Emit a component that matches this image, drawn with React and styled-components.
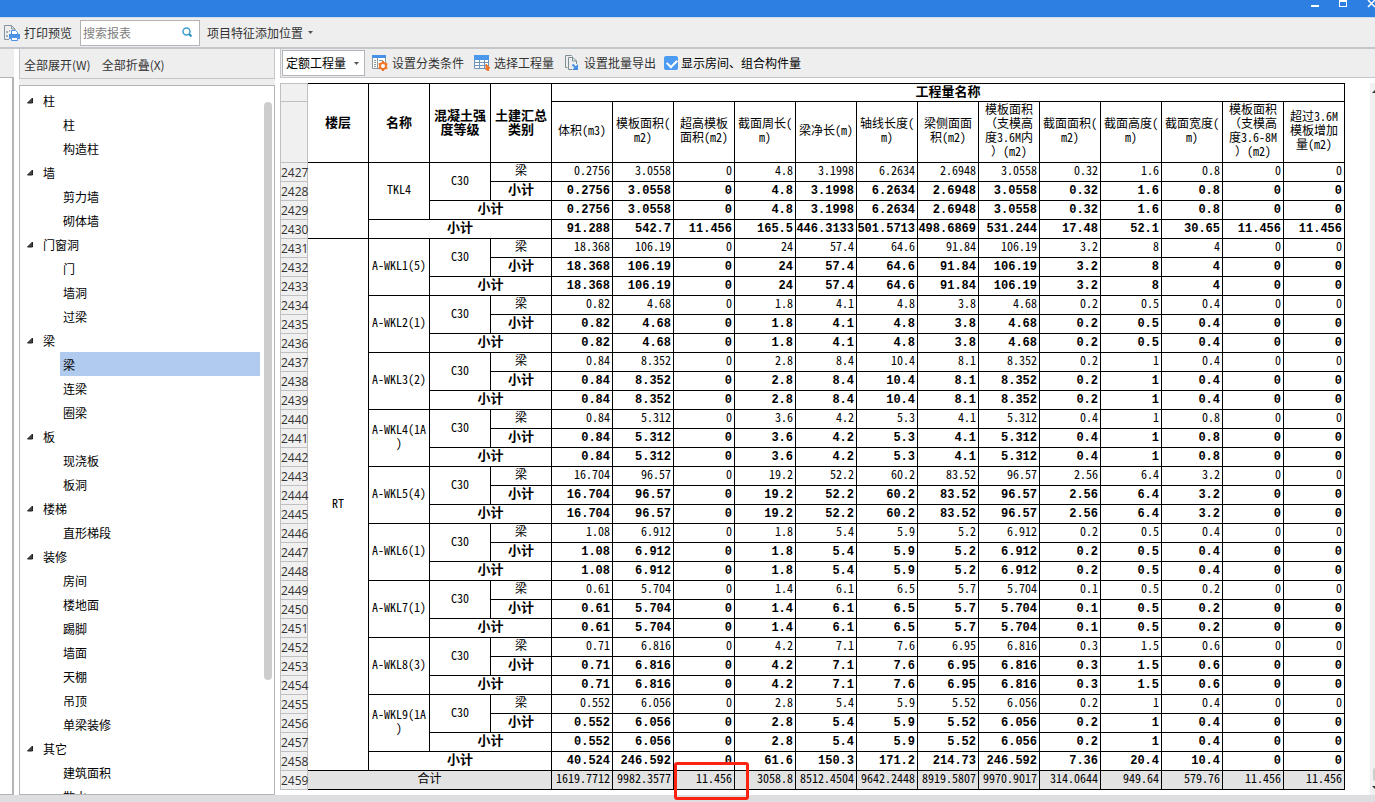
import React, { useState } from 'react';
import styled, { createGlobalStyle, ThemeProvider } from 'styled-components';

const theme = {
  colors: {
    title: '#2d7fe2',
    bar: '#eeeeee',
    line: '#c3c7cc',
    border: '#b2b4b8',
    text: '#333333',
    selected: '#b0cbed',
    total: '#e3e3e3',
    mark: '#fb2413',
    blue: '#4c9bf2',
  },
  fonts: {
    ui: '"Noto Sans CJK SC", sans-serif',
    rowNumber: '"Open Sans", sans-serif',
    sheet: '"Noto Sans Mono CJK SC", "DejaVu Sans Mono", "Noto Sans CJK SC", monospace',
    boldNumber: '"Liberation Mono", monospace',
  },
};

const GlobalStyle = createGlobalStyle`
  * {
    box-sizing: border-box;
  }

  body {
    margin: 0;
    background-color: #ffffff;
    overflow: hidden;
  }

  button, input, select {
    font: inherit;
    color: inherit;
  }
`;

const Window = styled.div`
  display: flex;
  flex-direction: column;
  height: 100vh;
  font-family: ${props => props.theme.fonts.ui};
  font-size: 12px;
  line-height: 18px;
  color: ${props => props.theme.colors.text};
`;

const TitleBar = styled.header`
  display: flex;
  justify-content: flex-end;
  gap: 20px;
  flex: 0 0 18px;
  background-color: ${props => props.theme.colors.title};
  border-bottom: 1px solid #cfdcec;
`;

const WindowButton = styled.button`
  display: flex;
  width: 8px;
  height: 8px;
  padding: 0;
  border: 0;
  background: none;
  color: #ffffff;
`;

const Toolbar = styled.div`
  display: flex;
  align-items: center;
  flex: 0 0 31px;
  padding-left: 4px;
  background-color: ${props => props.theme.colors.bar};
  border-bottom: 2px solid ${props => props.theme.colors.line};
`;

const ToolButton = styled.button`
  display: flex;
  align-items: center;
  gap: 4px;
  padding: 0;
  border: 0;
  background: none;
  white-space: nowrap;
`;

const SearchBox = styled.label`
  display: flex;
  align-items: center;
  width: 120px;
  height: 26px;
  margin: 0 7px 0 8px;
  padding: 0 6px 0 2px;
  background-color: #ffffff;
  border: 1px solid ${props => props.theme.colors.border};

  input {
    flex: 1;
    min-width: 0;
    padding: 0;
    border: 0;
    outline: 0;
    background: none;
  }

  input::placeholder {
    color: #808080;
    opacity: 1;
  }
`;

const Workspace = styled.div`
  display: flex;
  flex: 1;
  min-height: 0;
  border-bottom: 7px solid #dedee0;
`;

const DockedPanel = styled.div`
  display: flex;
  flex-direction: column;
  flex: 0 0 14px;
  margin-right: 5px;
`;

const DockedHead = styled.div`
  flex: 0 0 28px;
  background-color: ${props => props.theme.colors.bar};
`;

const DockedBody = styled.div`
  flex: 1;
  border: solid ${props => props.theme.colors.border};
  border-width: 1px 2px 1px 0;
`;

const Sidebar = styled.aside`
  display: flex;
  flex-direction: column;
  flex: 0 0 256px;
  margin-right: 5px;
  background-color: ${props => props.theme.colors.bar};
`;

const SidebarActions = styled.div`
  display: flex;
  align-items: center;
  gap: 11px;
  flex: 0 0 30px;
  margin-bottom: 6px;
  padding: 2px 0 0 4px;
  border: 1px solid ${props => props.theme.colors.line};
  border-top: 0;
`;

const TreePanel = styled.div`
  display: flex;
  flex: 1;
  min-height: 0;
  overflow: hidden;
  padding: 2px 2px 0 0;
  background-color: #ffffff;
  border: 1px solid ${props => props.theme.colors.border};
`;

const Tree = styled.ul`
  flex: 1;
  margin: 0;
  padding: 0;
  list-style: none;
  color: #000000;

  ul {
    margin: 0;
    padding: 0 0 0 40px;
    list-style: none;
  }
`;

const TreeItem = styled.button`
  display: flex;
  align-items: center;
  width: ${props => (props.$group ? '100%' : '200px')};
  height: 24px;
  padding: 1px 0 0 ${props => (props.$group ? '6px' : '3px')};
  gap: 9px;
  border: 0;
  background-color: ${props => (props.$selected ? props.theme.colors.selected : 'transparent')};
`;

const TreeThumb = styled.div`
  flex: 0 0 8px;
  height: 578px;
  margin-top: 14px;
  border-radius: 4px;
  background-color: #cdcdcd;
`;

const Report = styled.main`
  display: flex;
  flex-direction: column;
  flex: 1;
  min-width: 0;
`;

const ReportToolbar = styled.div`
  display: flex;
  align-items: center;
  flex: 0 0 29px;
  padding-left: 1px;
  background-color: ${props => props.theme.colors.bar};
  border: solid ${props => props.theme.colors.line};
  border-width: 0 0 1px 1px;
`;

const SelectBox = styled.div`
  display: flex;
  align-items: center;
  width: 83px;
  height: 26px;
  margin-right: 7px;
  padding-right: 5px;
  background-color: #ffffff;
  border: 1px solid ${props => props.theme.colors.border};
  color: #000000;

  select {
    flex: 1;
    min-width: 0;
    padding: 0 0 0 3px;
    border: 0;
    outline: 0;
    appearance: none;
    background: none;
  }
`;

const ReportTools = styled.div`
  display: flex;
  align-items: center;
  gap: 10px;
`;

const CheckLabel = styled.label`
  display: flex;
  align-items: center;
  gap: 3px;
  margin-left: 8px;
  color: #000000;
  white-space: nowrap;

  input {
    appearance: none;
    width: 14px;
    height: 14px;
    margin: 0;
    border-radius: 2px;
    background: #ffffff;
    border: 1px solid ${props => props.theme.colors.border};
  }

  input:checked {
    border: 0;
    background: ${props => props.theme.colors.blue};
  }

  input:checked::before {
    content: '';
    display: block;
    width: 8px;
    height: 5px;
    margin: 3px;
    border: solid #ffffff;
    border-width: 0 0 2px 2px;
    transform: rotate(-45deg);
  }
`;

const ReportBody = styled.div`
  display: flex;
  justify-content: space-between;
  flex: 1;
  min-height: 0;
  padding-top: 5px;
`;

const Sheet = styled.table`
  align-self: flex-start;
  table-layout: fixed;
  width: 1065px;
  border-collapse: separate;
  border-spacing: 0;
  font-family: ${props => props.theme.fonts.sheet};
  font-size: 12px;
  line-height: 14px;
  color: #000000;
`;

const SheetRow = styled.tr`
  height: ${props => props.$height || 19}px;
  background-color: ${props => (props.$total ? props.theme.colors.total : '#ffffff')};
`;

const Cell = styled.td`
  padding: 0 0 ${props => (props.$first ? '3px' : '4px')};
  border: solid #000000;
  border-width: ${props => (props.$first ? '1px' : '0')} 1px 1px 0;
  text-align: center;
  white-space: pre-line;
  font-weight: ${props => (props.$bold ? 'bold' : 'normal')};
  font-size: ${props => (props.$bold ? '13px' : '12px')};
`;

const NumberCell = styled(Cell)`
  position: relative;
  padding: 0 2px ${props => (props.$bold ? '0' : '4px')} 0;
  text-align: right;
  white-space: nowrap;
  font-family: ${props => (props.$bold ? props.theme.fonts.boldNumber : 'inherit')};
  font-size: 12px;
`;

const RowNumber = styled.th`
  padding: 2px 0 0;
  border: solid #c0c0c0;
  border-width: ${props => (props.$first ? '1px' : '0')} 1px 1px 1px;
  background-color: #f0f0f0;
  font-family: ${props => props.theme.fonts.rowNumber};
  font-size: 12px;
  font-weight: normal;
  color: ${props => props.theme.colors.text};
`;

const Mark = styled.span`
  position: absolute;
  top: -9px;
  left: 0;
  z-index: 1;
  width: 75px;
  height: 38px;
  border: 3px solid ${props => props.theme.colors.mark};
  border-radius: 3px;
  pointer-events: none;
`;

const ScrollTrack = styled.div`
  display: flex;
  flex-direction: column;
  align-items: flex-end;
  gap: 5px;
  flex: 0 0 5px;
  padding: 7px 0 6px;
  overflow: hidden;
  background-color: #f1f1f1;
`;

const ScrollThumb = styled.div`
  width: 2px;
  height: 13px;
  margin-top: auto;
  border-radius: 2px 0 0 2px;
  background-color: #cdcdcd;
`;

const TREE = [
  ['柱', ['柱', '构造柱']],
  ['墙', ['剪力墙', '砌体墙']],
  ['门窗洞', ['门', '墙洞', '过梁']],
  ['梁', ['梁', '连梁', '圈梁']],
  ['板', ['现浇板', '板洞']],
  ['楼梯', ['直形梯段']],
  ['装修', ['房间', '楼地面', '踢脚', '墙面', '天棚', '吊顶', '单梁装修']],
  ['其它', ['建筑面积', '散水']],
];

const QUANTITIES = [
  '体积(m3)',
  '模板面积(\nm2)',
  '超高模板\n面积(m2)',
  '截面周长(\nm)',
  '梁净长(m)',
  '轴线长度(\nm)',
  '梁侧面面\n积(m2)',
  '模板面积\n（支模高\n度3.6M内\n）(m2)',
  '截面面积(\nm2)',
  '截面高度(\nm)',
  '截面宽度(\nm)',
  '模板面积\n（支模高\n度3.6-8M\n）(m2)',
  '超过3.6M\n模板增加\n量(m2)',
];

const FLOORS = [
  {
    name: '',
    beams: [['TKL4', '0.2756 3.0558 0 4.8 3.1998 6.2634 2.6948 3.0558 0.32 1.6 0.8 0 0']],
    subtotal: '91.288 542.7 11.456 165.5 446.3133 501.5713 498.6869 531.244 17.48 52.1 30.65 11.456 11.456',
  },
  {
    name: 'RT',
    beams: [
      ['A-WKL1(5)', '18.368 106.19 0 24 57.4 64.6 91.84 106.19 3.2 8 4 0 0'],
      ['A-WKL2(1)', '0.82 4.68 0 1.8 4.1 4.8 3.8 4.68 0.2 0.5 0.4 0 0'],
      ['A-WKL3(2)', '0.84 8.352 0 2.8 8.4 10.4 8.1 8.352 0.2 1 0.4 0 0'],
      ['A-WKL4(1A\n)', '0.84 5.312 0 3.6 4.2 5.3 4.1 5.312 0.4 1 0.8 0 0'],
      ['A-WKL5(4)', '16.704 96.57 0 19.2 52.2 60.2 83.52 96.57 2.56 6.4 3.2 0 0'],
      ['A-WKL6(1)', '1.08 6.912 0 1.8 5.4 5.9 5.2 6.912 0.2 0.5 0.4 0 0'],
      ['A-WKL7(1)', '0.61 5.704 0 1.4 6.1 6.5 5.7 5.704 0.1 0.5 0.2 0 0'],
      ['A-WKL8(3)', '0.71 6.816 0 4.2 7.1 7.6 6.95 6.816 0.3 1.5 0.6 0 0'],
      ['A-WKL9(1A\n)', '0.552 6.056 0 2.8 5.4 5.9 5.52 6.056 0.2 1 0.4 0 0'],
    ],
    subtotal: '40.524 246.592 0 61.6 150.3 171.2 214.73 246.592 7.36 20.4 10.4 0 0',
  },
];

const TOTAL = '1619.7712 9982.3577 11.456 3058.8 8512.4504 9642.2448 8919.5807 9970.9017 314.0644 949.64 579.76 11.456 11.456';
const FIRST_ROW = 2427;
const MARKED_COLUMN = 2;

// flatten floors into table rows, each with the label cells that start on it
const buildRows = () => {
  const rows = [];
  FLOORS.forEach(floor => {
    floor.beams.forEach(([name, values], index) => {
      const labels = [
        { text: name, rowSpan: 3 },
        { text: 'C30', rowSpan: 2 },
        { text: '梁' },
      ];
      if (index === 0) {
        labels.unshift({ text: floor.name, rowSpan: floor.beams.length * 3 + 1 });
      }
      rows.push({ labels, values });
      rows.push({ labels: [{ text: '小计', bold: true }], values, bold: true });
      rows.push({ labels: [{ text: '小计', bold: true, colSpan: 2 }], values, bold: true });
    });
    rows.push({
      labels: [{ text: '小计', bold: true, colSpan: 3 }],
      values: floor.subtotal,
      bold: true,
    });
  });
  rows.push({ labels: [{ text: '合计', colSpan: 4 }], values: TOTAL, total: true });
  return rows;
};

const Caret = () => (
  <svg width="6" height="3" viewBox="0 0 6 3" aria-hidden="true">
    <path d="M1 0h5L3.5 3z" fill="#555" />
  </svg>
);

const Expander = () => (
  <svg width="8" height="8" viewBox="0 0 8 8" aria-hidden="true">
    <path d="M6.5 1v5H1.500z" fill="#444" stroke="#222" />
  </svg>
);

const PreviewIcon = () => (
  <svg width="16" height="16" viewBox="0 0 16 16" fill="none" aria-hidden="true">
    <path d="M5 14.500H.5V.5h7L11 4v1M7.500.5V4H11" stroke="#8593a0" />
    <path d="M2 6h2v2H2zM2 10h2v2H2zM5 5h1v2H5z" fill="#a5adb3" />
    <path d="M7.500 9V5.500h4L13.500 7.500V9" fill="#fff" stroke="#4c93e6" />
    <path d="M5 9h11v5h-2v-2H7v2H5z" fill="#4c93e6" />
    <path d="M7.500 12.500h6v3h-6z" fill="#fff" stroke="#4c93e6" />
  </svg>
);

const SearchIcon = () => (
  <svg width="11" height="11" viewBox="0 0 11 11" fill="none" aria-hidden="true">
    <circle cx="4.500" cy="4.500" r="3.500" stroke="#3fa0cf" strokeWidth="1.500" />
    <path d="M7 7l2.500 2.500" stroke="#2b8cc0" strokeWidth="2" />
  </svg>
);

const ClassifyIcon = () => (
  <svg width="16" height="16" viewBox="0 0 16 16" fill="none" aria-hidden="true">
    <path d="M.5.5h13v13H.5z" fill="#fff" stroke="#8d979e" />
    <path d="M0 0h14v3H0z" fill="#4590e6" />
    <path d="M5.500 3v11M2 5.500h2M2 7.500h2M2 9.500h2M2 11.500h2M7 5.500h4" stroke="#8d979e" />
    <circle cx="11" cy="11" r="3" fill="#fff" stroke="#f0762b" strokeWidth="2" />
    <path
      d="M11 6v2M11 14v2M6.700 8.500l1.700 1M13.600 12.500l1.700 1M15.300 8.500l-1.700 1M8.400 12.500l-1.700 1"
      stroke="#f0762b"
      strokeWidth="2"
    />
  </svg>
);

const PickIcon = () => (
  <svg width="16" height="16" viewBox="0 0 16 16" fill="none" aria-hidden="true">
    <path d="M.5.5h14v13H.5z" fill="#fff" stroke="#6f94b8" />
    <path d="M0 0h15v5H0z" fill="#4c98ec" />
    <path d="M0 7.500h15M0 10.500h15M5.500 5v9M10.500 5v9" stroke="#6f94b8" />
    <path d="M12 9l4 4-2 .5 1 2-1.500.5-1-2-.5 1z" fill="#f0762b" stroke="#f0762b" />
  </svg>
);

const ExportIcon = () => (
  <svg width="16" height="16" viewBox="0 0 16 16" fill="none" aria-hidden="true">
    <path d="M3.500 12.500h-2V.5h6l1 1" stroke="#7d8f94" />
    <path d="M8 14.500H4.500v-12H9l3.500 3.500v3M8.500 2.500V6h4" stroke="#7d8f94" />
    <path d="M8.500 9.500l4 4" stroke="#4590e6" strokeWidth="2" />
    <path d="M14 9v6H8z" fill="#4590e6" />
  </svg>
);

const TitleButtons = () => (
  <TitleBar>
    <WindowButton aria-label="最小化">
      <svg width="8" height="8"><path d="M0 5h8v2H0z" fill="currentColor" /></svg>
    </WindowButton>
    <WindowButton aria-label="最大化">
      <svg width="8" height="8"><path d="M0 0h8v7H0zM1 2v4h6V2z" fill="currentColor" fillRule="evenodd" /></svg>
    </WindowButton>
    <WindowButton aria-label="关闭">
      <svg width="8" height="8"><path d="M1 0l7 7M8 0L1 7" stroke="currentColor" strokeWidth="1.500" /></svg>
    </WindowButton>
  </TitleBar>
);

const ReportTable = () => (
  <Sheet>
    <colgroup>
      <col style={{ width: 28 }} />
      {Array.from({ length: QUANTITIES.length + 4 }, (_, i) => <col key={i} />)}
    </colgroup>
    <thead>
      <SheetRow $height={19}>
        <RowNumber $first />
        {['楼层', '名称', '混凝土强\n度等级', '土建汇总\n类别'].map(text => (
          <Cell as="th" key={text} rowSpan={2} $first $bold>{text}</Cell>
        ))}
        <Cell as="th" colSpan={QUANTITIES.length} $first $bold>工程量名称</Cell>
      </SheetRow>
      <SheetRow $height={61}>
        <RowNumber />
        {QUANTITIES.map(text => <Cell as="th" key={text}>{text}</Cell>)}
      </SheetRow>
    </thead>
    <tbody>
      {buildRows().map((row, index) => (
        <SheetRow key={index} $total={row.total}>
          <RowNumber scope="row">{FIRST_ROW + index}</RowNumber>
          {row.labels.map((label, i) => (
            <Cell key={i} rowSpan={label.rowSpan} colSpan={label.colSpan} $bold={label.bold}>
              {label.text}
            </Cell>
          ))}
          {row.values.split(' ').map((value, i) => (
            <NumberCell key={i} $bold={row.bold}>
              {value}
              {row.total && i === MARKED_COLUMN && <Mark />}
            </NumberCell>
          ))}
        </SheetRow>
      ))}
    </tbody>
  </Sheet>
);

const App = () => {
  const [selected, setSelected] = useState('梁/梁');
  const [showRooms, setShowRooms] = useState(true);

  return (
    <ThemeProvider theme={theme}>
      <GlobalStyle />
      <Window>
        <TitleButtons />
        <Toolbar>
          <ToolButton><PreviewIcon />打印预览</ToolButton>
          <SearchBox>
            <input type="text" placeholder="搜索报表" aria-label="搜索报表" />
            <SearchIcon />
          </SearchBox>
          <ToolButton>项目特征添加位置<Caret /></ToolButton>
        </Toolbar>
        <Workspace>
          <DockedPanel>
            <DockedHead />
            <DockedBody />
          </DockedPanel>
          <Sidebar>
            <SidebarActions>
              <ToolButton>全部展开(W)</ToolButton>
              <ToolButton>全部折叠(X)</ToolButton>
            </SidebarActions>
            <TreePanel>
              <Tree>
                {TREE.map(([group, items]) => (
                  <li key={group}>
                    <TreeItem $group><Expander />{group}</TreeItem>
                    <ul>
                      {items.map(item => {
                        const id = `${group}/${item}`;
                        return (
                          <li key={id}>
                            <TreeItem $selected={id === selected} onClick={() => setSelected(id)}>
                              {item}
                            </TreeItem>
                          </li>
                        );
                      })}
                    </ul>
                  </li>
                ))}
              </Tree>
              <TreeThumb />
            </TreePanel>
          </Sidebar>
          <Report>
            <ReportToolbar>
              <SelectBox>
                <select aria-label="工程量类型">
                  <option>定额工程量</option>
                </select>
                <Caret />
              </SelectBox>
              <ReportTools>
                <ToolButton><ClassifyIcon />设置分类条件</ToolButton>
                <ToolButton><PickIcon />选择工程量</ToolButton>
                <ToolButton><ExportIcon />设置批量导出</ToolButton>
              </ReportTools>
              <CheckLabel>
                <input
                  type="checkbox"
                  checked={showRooms}
                  onChange={event => setShowRooms(event.target.checked)}
                />
                显示房间、组合构件量
              </CheckLabel>
            </ReportToolbar>
            <ReportBody>
              <ReportTable />
              <ScrollTrack>
                <svg width="5" height="3"><path d="M2 3l3-3v3z" fill="#333" /></svg>
                <ScrollThumb />
                <svg width="5" height="3"><path d="M2 0h3v3z" fill="#333" /></svg>
              </ScrollTrack>
            </ReportBody>
          </Report>
        </Workspace>
      </Window>
    </ThemeProvider>
  );
};

export default App;
